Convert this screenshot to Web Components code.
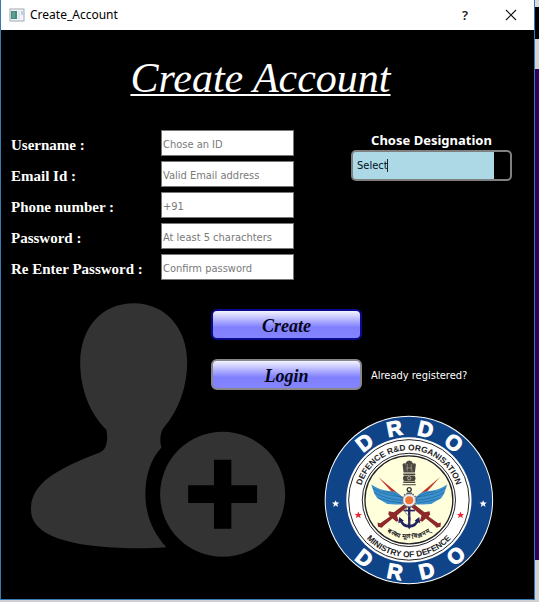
<!DOCTYPE html>
<html lang="en">
<head>
<meta charset="utf-8">
<title>Create_Account</title>
<style>
  html, body { margin: 0; min-height: 100%; background: #d9dadc; }
  body { --ui: "Noto Sans", "Open Sans", sans-serif; font: 11px/16px "DejaVu Sans Condensed", "Noto Sans", sans-serif; color: #fff; }
</style>
</head>
<body>
<account-dialog></account-dialog>
<script>
const define = (name, html, setup) => customElements.define(name, class extends HTMLElement {
  constructor() {
    super();
    const t = document.createElement('template');
    t.innerHTML = html;
    this.attachShadow({ mode: 'open' }).append(t.content.cloneNode(true));
  }
  connectedCallback() { if (setup) setup(this, this.shadowRoot); }
});

define('title-bar', `
  <style>
    :host { display: flex; align-items: center; height: 30px; background: #fff; color: #000; font: 12px/16px var(--ui); padding: 0 10px 0 8px; box-sizing: border-box; }
    .name { margin-left: 5px; flex: 1; }
    button { border: 0; padding: 0; background: none; width: 26px; height: 28px; margin-left: 20px; font: 600 13px/28px var(--ui); color: #222; display: grid; place-items: center; }
    svg { display: block; }
  </style>
  <svg width="16" height="14" viewBox="0 0 16 14" aria-hidden="true">
    <rect x="1" y="1" width="14" height="12" fill="#f2f4f7" stroke="#a0aab4"/>
    <rect x="2" y="3" width="6" height="8" fill="#468a7c"/><rect x="3" y="4" width="3" height="6" fill="#5f9f92"/>
    <rect x="9" y="3" width="2" height="8" fill="#dfe6ee"/><rect x="12" y="3" width="2" height="4" fill="#c3d0da"/>
  </svg>
  <span class="name"><slot></slot></span>
  <button aria-label="Help">?</button>
  <button aria-label="Close"><svg width="12" height="12" viewBox="0 0 12 12"><path d="M1 1 11 11M11 1 1 11" stroke="#111" stroke-width="1.1"/></svg></button>
`);

define('form-field', `
  <style>
    :host { display: grid; grid-template-columns: 150fr 133fr; height: 26px; align-items: center; }
    label { font: bold 15px/18px "Liberation Serif", serif; padding-top: 4px; white-space: nowrap; }
    input { box-sizing: border-box; width: 100%; height: 26px; border: 1px solid #777; border-radius: 0; background: #fff; color: #000; padding: 2px 2px 0 1px; font: inherit; }
    input::placeholder { color: #7a7a7a; opacity: 1; }
  </style>
  <label for="i"></label><input id="i">
`, (el, root) => {
  root.querySelector('label').textContent = el.getAttribute('label');
  const i = root.querySelector('input');
  i.type = el.getAttribute('type') || 'text';
  i.placeholder = el.getAttribute('hint');
});

define('designation-picker', `
  <style>
    :host { display: flex; flex-direction: column; gap: 1px; }
    label { font: bold 13px/18px var(--ui); text-align: center; }
    select { appearance: none; box-sizing: border-box; width: 100%; height: 31px; border: 2px solid #808080; border-radius: 5px; padding: 0 20px 0 4px; font: inherit; color: #001020;
      background: linear-gradient(#223, #223) 34px center / 1px 13px no-repeat, linear-gradient(90deg, #add8e6 calc(100% - 16px), #000 calc(100% - 16px)); }
  </style>
  <label for="d">Chose Designation</label>
  <select id="d"><option>Select</option></select>
`);

define('glossy-button', `
  <style>
    :host { display: block; }
    button { box-sizing: border-box; width: 100%; height: 31px; border: 2px solid #88888c; border-radius: 6px; padding: 3px 0 0; color: #050518;
      font: italic bold 18px/22px "Liberation Serif", serif; background: linear-gradient(#f4f4ff, #8080ff 60%, #8484ff); }
    :host([primary]) button { border-color: #0a0a90; }
  </style>
  <button><slot></slot></button>
`);

define('user-avatar', `
  <style>:host { display: block; } svg { display: block; width: 100%; }</style>
  <svg viewBox="36 40 762 760" role="img" aria-label="Add user">
    <g fill="#333">
      <path d="M344 41C440 42 503 117 503 217C503 288 479 360 432 414C421 430 421 455 426 472C395 505 378 555 378 610C378 675 402 730 441 770C400 773 370 774 330 773C150 770 36 735 36 660C32 575 130 530 240 488C262 480 268 450 261 418C215 375 183 300 183 217C185 115 245 41 344 41Z"/>
      <circle cx="609" cy="612" r="187"/>
    </g>
    <path d="M583 509H635V585H712V638H635V715H583V638H506V585H583Z"/>
  </svg>
`);

define('drdo-emblem', `
  <style>
    :host { display: block; } svg { display: block; width: 100%; }
    text { font-family: "Liberation Sans", sans-serif; font-weight: bold; }
    .big { font-size: 64px; fill: #fff; stroke: #fff; stroke-width: 3; }
    .ring { fill: #222; text-anchor: middle; }
  </style>
  <svg viewBox="12 17 510 510" role="img" aria-label="DRDO emblem">
    <defs>
      <path id="up" d="M118 272A149 149 0 0 1 416 272"/>
      <path id="down" d="M95 272A172 172 0 0 0 439 272"/>
      <path id="motto" d="M143 264A124 124 0 0 0 391 264"/>
      <path id="star" d="M0-11 3-4 11-4 5 1 7 9 0 4-7 9-5 1-11-4-3-4Z"/>
    </defs>
    <circle cx="267" cy="272" r="253" fill="#fff"/>
    <circle cx="267" cy="272" r="250" fill="#104488"/>
    <circle cx="267" cy="272" r="188" fill="#fff"/>
    <circle cx="267" cy="272" r="181" fill="none" stroke="#222" stroke-width="3"/>
    <circle cx="267" cy="272" r="140" fill="#fff" stroke="#222" stroke-width="3"/>
    <circle cx="267" cy="272" r="132" fill="#ffffdc" stroke="#222" stroke-width="4"/>
    <text class="big" x="129 205 290 369" y="131 84 76 103" rotate="-38 -11 13 38">DRDO</text>
    <text class="big" x="101 198 303 403" y="450 505 512 473" rotate="38 11 -14 -40">DRDO</text>
    <text class="ring" font-size="25"><textPath href="#up" startOffset="50%">DEFENCE R&amp;D ORGANISATION</textPath></text>
    <text class="ring" font-size="25"><textPath href="#down" startOffset="50%">MINISTRY OF DEFENCE</textPath></text>
    <text class="ring" font-size="19"><textPath href="#motto" startOffset="50%">बलस्य मूलं विज्ञानम्</textPath></text>
    <g fill="#fff"><use href="#star" x="47" y="284"/><use href="#star" x="490" y="284"/></g>
    <g fill="#e8242c"><use href="#star" x="115" y="318"/><use href="#star" x="422" y="318"/></g>
    <g fill="#4a4640">
      <path d="M257 162Q260 154 268 154Q276 154 279 162L281 172 277 190H259L255 172Z"/>
      <path d="M248 166Q250 160 256 163L259 190H251ZM288 166Q286 160 280 163L277 190H285Z"/>
      <path d="M250 193H286V197H250ZM252 199H284Q290 208 284 215H252Q246 208 252 199ZM250 217H286V221H250ZM248 225H288V228H248Z"/>
    </g>
    <path d="M262 164V186M274 164V186M259 176H277" stroke="#aaa78f" stroke-width="2"/>
    <circle cx="268" cy="207" r="5" fill="none" stroke="#ddd9bd" stroke-width="2"/>
    <g id="sword">
      <path d="M175 203 248 264 238 273Z" fill="#c6352c"/>
      <path d="M254 284 242 294 222 309 207 306 205 315 210 322 181 342 173 340 174 353 186 356 192 349 218 328 229 338 236 335 231 319 266 290Z" fill="#8d2928"/>
    </g>
    <use href="#sword" transform="matrix(-1 0 0 1 536 0)"/>
    <g id="wing">
      <path d="M154 226Q179 243 207 245Q236 245 251 269L247 286 226 286 202 284 187 275 172 267 163 253Z" fill="#3d91cc"/>
      <path d="M158 236Q190 258 246 263M163 250Q198 270 246 273M176 267Q210 278 244 281M190 246Q221 249 249 267" fill="none" stroke="#1b659c" stroke-width="2"/>
    </g>
    <use href="#wing" transform="matrix(-1 0 0 1 536 0)"/>
    <g fill="none" stroke="#23235f">
      <circle cx="268" cy="241" r="6" stroke="#333" stroke-width="4"/>
      <path d="M260 252H276" stroke="#333" stroke-width="4"/>
      <path d="M268 290V350" stroke-width="7"/><path d="M251 304H285" stroke-width="5"/>
      <path d="M242 331Q248 351 268 351Q288 351 294 331" stroke-width="8"/>
      <path d="M262 294Q250 312 266 319Q280 328 264 343" stroke="#666" stroke-width="2"/>
    </g>
    <path d="M235 342 238 323 252 335ZM301 342 298 323 284 335ZM260 350 268 360 276 350Z" fill="#23235f"/>
    <circle cx="268" cy="273" r="21" fill="none" stroke="#555a72" stroke-width="4" stroke-dasharray="5 4"/>
    <circle cx="268" cy="273" r="19" fill="#eeeef0" stroke="#8185a0" stroke-width="2"/>
    <circle cx="268" cy="273" r="12" fill="#ed7634"/>
  </svg>
`);

define('account-dialog', `
  <style>
    :host { display: block; box-sizing: border-box; min-height: 100vh; padding: 0 4px 2px 0;
      background: linear-gradient(#d9dadc 7px, #000 7px 39px, #d3d3d6 39px 69px, #30005c 69px 560px, #cfd1d4 560px); }
    .window { box-sizing: border-box; min-height: calc(100vh - 2px); background: #000; border: 1px solid #347bb5; border-top: 0; }
    main { padding: 20px 22px 12px 10px; }
    h1 { margin: 0 2px 24px 0; text-align: center; font: italic 42px/56px "Liberation Serif", serif; text-decoration: underline 2px; text-underline-offset: 2px; text-decoration-skip-ink: none; }
    .top { display: grid; grid-template-columns: 283fr 161fr; gap: 57px; align-items: start; }
    .fields { display: grid; gap: 5px; }
    designation-picker { margin-top: 1px; }
    .lower { display: grid; grid-template-columns: 180fr 151fr 132fr; grid-template-rows: 31px 31px auto; row-gap: 19px; margin: 23px 18px 0 20px; padding-top: 6px; }
    user-avatar { grid-area: 1 / 1 / 4 / 3; width: 77%; margin-top: -6px; }
    .create { grid-area: 1 / 2; } .login { grid-area: 2 / 2; }
    p { grid-area: 2 / 3; margin: 2px 0 0 9px; align-self: center; white-space: nowrap; }
    drdo-emblem { grid-area: 3 / 2 / 4 / 4; justify-self: end; width: 60%; margin-top: 6px; }
  </style>
  <div class="window">
    <title-bar>Create_Account</title-bar>
    <main>
      <h1>Create Account</h1>
      <div class="top">
        <div class="fields">
          <form-field label="Username :" hint="Chose an ID"></form-field>
          <form-field label="Email Id :" hint="Valid Email address" type="email"></form-field>
          <form-field label="Phone number :" hint="+91" type="tel"></form-field>
          <form-field label="Password :" hint="At least 5 charachters" type="password"></form-field>
          <form-field label="Re Enter Password :" hint="Confirm password" type="password"></form-field>
        </div>
        <designation-picker></designation-picker>
      </div>
      <div class="lower">
        <user-avatar></user-avatar>
        <glossy-button class="create" primary>Create</glossy-button>
        <glossy-button class="login">Login</glossy-button>
        <p>Already registered?</p>
        <drdo-emblem></drdo-emblem>
      </div>
    </main>
  </div>
`);
</script>
</body>
</html>
